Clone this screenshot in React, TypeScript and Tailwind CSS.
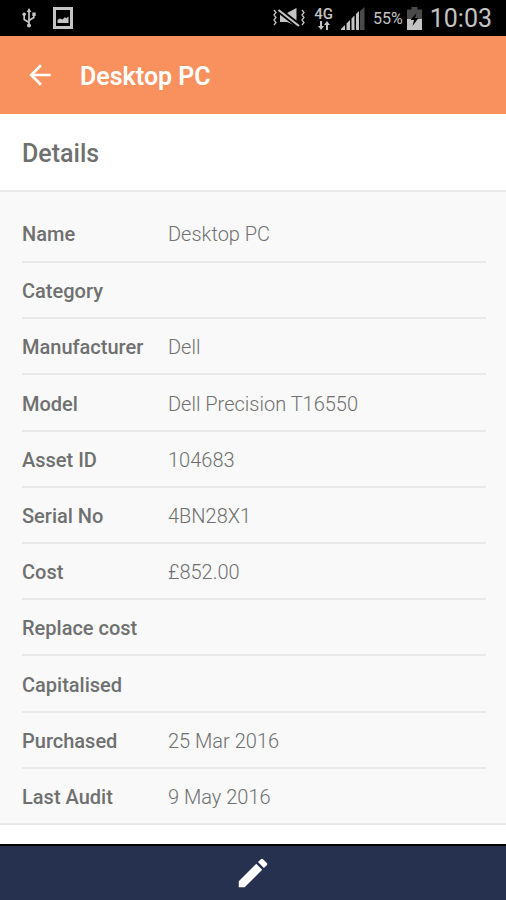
import { MdArrowBack, MdEdit } from "react-icons/md"

const details = [
  { label: "Name", value: "Desktop PC" },
  { label: "Category", value: "" },
  { label: "Manufacturer", value: "Dell" },
  { label: "Model", value: "Dell Precision T16550" },
  { label: "Asset ID", value: "104683" },
  { label: "Serial No", value: "4BN28X1" },
  { label: "Cost", value: "£852.00" },
  { label: "Replace cost", value: "" },
  { label: "Capitalised", value: "" },
  { label: "Purchased", value: "25 Mar 2016" },
  { label: "Last Audit", value: "9 May 2016" },
]

function UsbIcon() {
  return (
    <svg width="14" height="20" viewBox="0 0 14 20" fill="none" stroke="currentColor" strokeWidth="1.7">
      <path d="M7 3v14M7 14.5L2.2 11.5V7M7 12.5l4.8-3V6.5" />
      <path d="M7 0l2.4 4H4.6z" fill="currentColor" stroke="none" />
      <circle cx="7" cy="17.5" r="2" fill="currentColor" stroke="none" />
      <circle cx="2.2" cy="6.2" r="1.8" fill="currentColor" stroke="none" />
      <path d="M10.3 4.5h3.4v3.4h-3.4z" fill="currentColor" stroke="none" />
    </svg>
  )
}

function PictureIcon() {
  return (
    <svg width="20" height="22" viewBox="0 0 20 22" fill="none">
      <path d="M1.5 1.5h17v19h-17z" stroke="currentColor" strokeWidth="3" />
      <path d="M4.5 16v-3l2.5-1.5 2.5 1 2.5-2.5 1 1.5 2.5-2V16z" fill="currentColor" />
    </svg>
  )
}

function MutedIcon() {
  return (
    <svg width="34" height="20" viewBox="0 0 34 20" fill="none" stroke="currentColor">
      <path d="M8 5h7l9.500-5v18L15 14H8z" fill="currentColor" stroke="none" />
      <path d="M6 1.500L27 18" stroke="#000" strokeWidth="5.500" />
      <path d="M6.500 2L27 18" strokeWidth="2.200" />
      <path d="M2 2l2 2.500L2 7l2 2.500L2 12l2 2.500L2 17M30 2l2 2.500L30 7l2 2.500-2 2.500 2 2.500-2 2.500" strokeWidth="1.300" />
    </svg>
  )
}

function DataArrowsIcon() {
  return (
    <svg width="12" height="9" viewBox="0 0 12 9" fill="currentColor">
      <path d="M2 0h2v5h2L3 9 0 5h2zM8 9h2V4h2L9 0 6 4h2z" />
    </svg>
  )
}

function SignalIcon() {
  return (
    <svg width="24" height="23" viewBox="0 0 24 23" fill="currentColor">
      <path d="M0 23v-1l4-4v5zM5.5 23v-6.5L9 13v10zM10.5 23V11.5l3-3V23zM15 23V7l3-3v19z" />
      <path d="M19 23V4l4.500-4v23z" fill="#4a4a4a" />
    </svg>
  )
}

function BatteryIcon() {
  return (
    <svg width="15" height="23" viewBox="0 0 15 23">
      <path d="M4.5 0h6v2.5H15V12H0V2.5h4.5z" fill="#4a4a4a" />
      <path d="M0 12h15v11H0z" fill="currentColor" />
      <path d="M9.5 6l-6 7H7l-1.500 6 6-8H8z" fill="#000" />
    </svg>
  )
}

function StatusBar() {
  return (
    <div className="flex h-9 items-center justify-between bg-black pl-[22px] pr-[14px] text-[#c4c4c4]">
      <div className="flex items-center gap-[17px]">
        <UsbIcon />
        <PictureIcon />
      </div>
      <div className="flex items-center">
        <MutedIcon />
        <div className="ml-2 flex flex-col items-center">
          <span className="text-[15px] font-medium leading-[14px]">4G</span>
          <DataArrowsIcon />
        </div>
        <div className="ml-2">
          <SignalIcon />
        </div>
        <span className="ml-2 pt-0.5 text-[16px] leading-5">55%</span>
        <div className="ml-1">
          <BatteryIcon />
        </div>
        <span className="ml-2 pt-0.5 text-[25px] leading-8">10:03</span>
      </div>
    </div>
  )
}

export default function App() {
  return (
    <div className="flex min-h-screen flex-col bg-white font-['Roboto',sans-serif] text-[#6f7070]">
      <StatusBar />

      <header className="flex h-[78px] items-center gap-6 bg-[#f8915d] pl-6 text-white">
        <button type="button" aria-label="Back">
          <MdArrowBack size={32} />
        </button>
        <h1 className="pt-1 text-[25px] font-semibold leading-8">Desktop PC</h1>
      </header>

      <h2 className="flex h-[78px] items-center border-b-2 border-[#e9e9e9] px-[22px] pt-1 text-[25px] font-medium leading-8">
        Details
      </h2>

      <dl className="flex flex-1 flex-col border-b-2 border-[#e9e9e9] bg-[#f9f9f9] pl-[22px] pr-5 pt-[13px]">
        {details.map((item) => (
          <div
            key={item.label}
            className="flex min-h-14 flex-1 items-center border-t-2 border-[#e9e9e9] pt-0.5 text-[20px] leading-6 first:border-t-0"
          >
            <dt className="w-[146px] shrink-0 font-medium">{item.label}</dt>
            <dd className="font-light">{item.value}</dd>
          </div>
        ))}
      </dl>

      <footer className="mt-[19px] flex h-14 items-center justify-center border-t-2 border-black bg-[#26304f] text-white">
        <button type="button" aria-label="Edit">
          <MdEdit size={38} />
        </button>
      </footer>
    </div>
  )
}
